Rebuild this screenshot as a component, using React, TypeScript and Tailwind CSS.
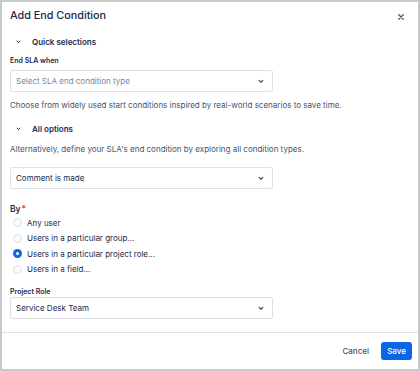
import React from "react";

function Chevron({ className }: { className?: string }) {
  return (
    <svg viewBox="0 0 8 6" className={className} fill="none" stroke="currentColor" strokeWidth="1.6" strokeLinecap="round" strokeLinejoin="round">
      <path d="M1.5 1.5 L4 4 L6.5 1.5" />
    </svg>
  );
}

function Select({ value, placeholder }: { value?: string; placeholder?: string }) {
  return (
    <div className="flex h-[22px] w-[263px] items-center justify-between rounded-[2px] border border-[#dfe1e6] bg-white pl-[5px] pr-[8px]">
      <span className={value ? "text-[#172b4d]" : "text-[#7a869a]"}>{value ?? placeholder}</span>
      <Chevron className="h-[5px] w-[6px] text-[#42526e]" />
    </div>
  );
}

function Radio({ label, checked }: { label: string; checked?: boolean }) {
  return (
    <div className="flex h-[15.5px] items-center gap-[5px] pl-[3px]">
      {checked ? (
        <span className="flex h-[9px] w-[9px] items-center justify-center rounded-full bg-[#0c66e4]">
          <span className="h-[3px] w-[3px] rounded-full bg-white" />
        </span>
      ) : (
        <span className="h-[9px] w-[9px] rounded-full border border-[#dfe1e6] bg-[#fafbfc]" />
      )}
      <span className="text-[#172b4d]">{label}</span>
    </div>
  );
}

export default function App() {
  return (
    <div className="h-[371px] w-[420px] border-2 border-[#c8c9cb] bg-white text-[8px] leading-[12px] text-[#172b4d]" style={{ fontFamily: "Inter, 'Noto Sans', sans-serif" }}>
      <div className="flex h-full flex-col">
        <div className="flex-1 pl-[8px]">
          <div className="flex items-center justify-between pr-[14px] pt-[6px]">
            <h1 className="text-[10.8px] font-medium leading-[15px]">Add End Condition</h1>
            <svg viewBox="0 0 8 8" className="mt-[3px] h-[6px] w-[6px] text-[#42526e]" stroke="currentColor" strokeWidth="1.6" strokeLinecap="round">
              <path d="M1 1 L7 7 M7 1 L1 7" />
            </svg>
          </div>

          <div className="mt-[13px] flex items-center gap-[11px] pl-[6px] font-semibold">
            <Chevron className="h-[4px] w-[5px]" />
            <span>Quick selections</span>
          </div>

          <div className="mt-[8px] text-[7px] font-semibold leading-[10px]">End SLA when</div>
          <div className="mt-[4px]">
            <Select placeholder="Select SLA end condition type" />
          </div>
          <p className="mt-[7px] text-[#44546f]">Choose from widely used start conditions inspired by real-world scenarios to save time.</p>

          <div className="mt-[12px] flex items-center gap-[11px] pl-[6px] font-semibold">
            <Chevron className="h-[4px] w-[5px]" />
            <span>All options</span>
          </div>
          <p className="mt-[8px] text-[#44546f]">Alternatively, define your SLA's end condition by exploring all condition types.</p>

          <div className="mt-[12px]">
            <Select value="Comment is made" />
          </div>

          <div className="mt-[14px] text-[8.5px] font-semibold">
            By<span className="ml-[1px] text-[#de350b]">*</span>
          </div>
          <div className="flex flex-col">
            <Radio label="Any user" />
            <Radio label="Users in a particular group..." />
            <Radio label="Users in a particular project role..." checked />
            <Radio label="Users in a field..." />
          </div>

          <div className="mt-[10px] text-[7px] font-semibold leading-[10px]">Project Role</div>
          <div className="mt-0">
            <Select value="Service Desk Team" />
          </div>
        </div>

        <div className="flex h-[37px] items-center justify-end gap-[12px] border-t border-[#dfe1e6] pr-[6px]">
          <span className="font-medium text-[#42526e]">Cancel</span>
          <button className="h-[18px] w-[31px] rounded-[3px] bg-[#0c66e4] font-medium text-white">Save</button>
        </div>
      </div>
    </div>
  );
}
